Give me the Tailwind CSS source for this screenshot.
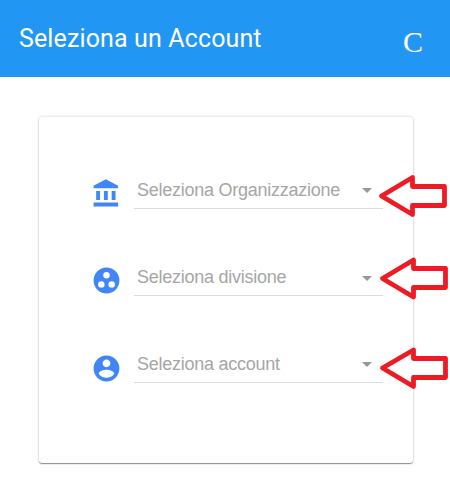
<!DOCTYPE html>
<html lang="it">
<head>
<meta charset="utf-8">
<title>Seleziona un Account</title>
<script src="https://cdn.jsdelivr.net/npm/@tailwindcss/browser@4"></script>
</head>
<body class="relative h-[500px] w-[450px] overflow-hidden bg-white">
<header class="flex h-[77px] items-center justify-between bg-[#2196f3] pr-[27px] pl-[19px] text-white">
  <h1 class="font-['Roboto',sans-serif] text-[25px] leading-[30px] tracking-[0.13px] whitespace-nowrap">Seleziona un Account</h1>
  <button class="mt-[7px] font-['Liberation_Serif',serif] text-[30px] leading-[30px]">C</button>
</header>
<main class="mt-10 ml-[39px] h-[346px] w-[374px] rounded-[3px] bg-white pt-[52px] pl-[52px] shadow-[0_1px_1px_rgba(0,0,0,0.4),0_0_3px_rgba(0,0,0,0.2)]">
  <div class="flex h-[87px] items-start">
    <svg class="mt-[9px] h-[31px] w-[31px] shrink-0 fill-[#4285f4]" viewBox="0 0 24 24"><path d="M4 10v7h3v-7H4zm6 0v7h3v-7h-3zM2 22h19v-3H2v3zm14-12v7h3v-7h-3zM11.500 1L2 6v2h19V6l-9.500-5z"/></svg>
    <div class="ml-3 flex h-10 w-[249px] items-center justify-between border-b border-[#dcdcdc] pr-[11px] pl-[3px]">
      <span class="mt-0.5 font-['Liberation_Sans',sans-serif] text-[18px] leading-5 tracking-[-0.25px] whitespace-nowrap text-[#a6a6a6]">Seleziona Organizzazione</span>
      <svg class="mt-[3px] h-[5px] w-[10px] fill-[#989898]" viewBox="0 0 10 5"><path d="M0 0h10L5 5z"/></svg>
    </div>
  </div>
  <div class="flex h-[87px] items-start">
    <svg class="mt-[9px] h-[31px] w-[31px] shrink-0 fill-[#4285f4]" viewBox="0 0 24 24"><path fill-rule="evenodd" d="M12 2a10 10 0 1 0 0 20a10 10 0 1 0 0-20zM8 17.500a2.500 2.500 0 1 1 0-5a2.500 2.500 0 0 1 0 5zM9.500 8a2.500 2.500 0 1 1 5 0a2.500 2.500 0 0 1-5 0zM16 17.500a2.500 2.500 0 1 1 0-5a2.500 2.500 0 0 1 0 5z"/></svg>
    <div class="ml-3 flex h-10 w-[249px] items-center justify-between border-b border-[#dcdcdc] pr-[11px] pl-[3px]">
      <span class="mt-0.5 font-['Liberation_Sans',sans-serif] text-[18px] leading-5 tracking-[-0.25px] whitespace-nowrap text-[#a6a6a6]">Seleziona divisione</span>
      <svg class="mt-[5px] h-[5px] w-[10px] fill-[#989898]" viewBox="0 0 10 5"><path d="M0 0h10L5 5z"/></svg>
    </div>
  </div>
  <div class="flex h-[87px] items-start">
    <svg class="mt-[10px] h-[31px] w-[31px] shrink-0 fill-[#4285f4]" viewBox="0 0 24 24"><path d="M12 2C6.480 2 2 6.480 2 12s4.480 10 10 10 10-4.480 10-10S17.520 2 12 2zm0 3c1.660 0 3 1.340 3 3s-1.340 3-3 3-3-1.340-3-3 1.340-3 3-3zm0 14.200c-2.500 0-4.710-1.280-6-3.220.030-1.990 4-3.080 6-3.080 1.990 0 5.970 1.090 6 3.080-1.290 1.940-3.500 3.220-6 3.220z"/></svg>
    <div class="ml-3 flex h-10 w-[249px] items-center justify-between border-b border-[#dcdcdc] pr-[11px] pl-[3px]">
      <span class="mt-0.5 font-['Liberation_Sans',sans-serif] text-[18px] leading-5 tracking-[-0.25px] whitespace-nowrap text-[#a6a6a6]">Seleziona account</span>
      <svg class="mt-[3px] h-[5px] w-[10px] fill-[#989898]" viewBox="0 0 10 5"><path d="M0 0h10L5 5z"/></svg>
    </div>
  </div>
</main>
<svg class="pointer-events-none absolute inset-0 h-[500px] w-[450px] fill-white stroke-[#ed1c24]" viewBox="0 0 450 500" stroke-width="4.800" stroke-linejoin="round">
  <path d="M381.500 196L412.500 177.500V186.500H444.500V205.500H412.500V214.500Z"/>
  <path d="M382.500 278.500L413.500 260V268.500H445.500V287.500H413.500V297Z"/>
  <path d="M382.500 368L413.500 350V358.500H445.500V377.500H413.500V386.500Z"/>
</svg>
</body>
</html>
